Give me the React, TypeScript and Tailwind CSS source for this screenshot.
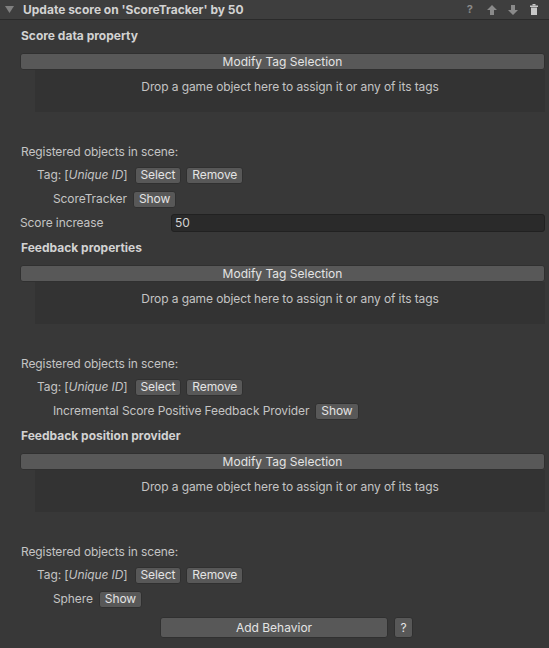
import React from "react";

const font = { fontFamily: "Inter, 'Noto Sans', sans-serif" };

function Btn({ children, className }: { children: React.ReactNode; className: string }) {
  return (
    <div
      className={
        "flex items-center justify-center rounded-[3px] bg-[#585858] border border-[#303030] text-[#e4e4e4] text-[12px] leading-none " +
        className
      }
    >
      {children}
    </div>
  );
}

function Section({ title, name, score }: { title: string; name: string; score?: boolean }) {
  return (
    <div>
      <div className="h-[18px] flex items-center pl-[1px] font-bold text-[#d2d2d2] tracking-normal">{title}</div>
      <Btn className="mt-[8px] h-[17px] w-full tracking-normal">Modify Tag Selection</Btn>
      <div className="ml-[15px] h-[42px] bg-[#333333] flex justify-center pt-[8px]">
        <span className="h-[18px] leading-[18px] text-[#c4c4c4]">
          Drop a game object here to assign it or any of its tags
        </span>
      </div>
      <div className="mt-[31px] h-[18px] flex items-center pl-[1px]">Registered objects in scene:</div>
      <div className="mt-[5px] h-[18px] flex items-center pl-[17px]">
        <span>
          Tag: [<i>Unique ID</i>]
        </span>
        <Btn className="ml-[7px] h-[17px] px-[5px]">Select</Btn>
        <Btn className="ml-[5px] h-[17px] px-[5px]">Remove</Btn>
      </div>
      <div className="mt-[6px] h-[18px] flex items-center pl-[33px]">
        <span>{name}</span>
        <Btn className="ml-[6px] h-[17px] px-[5px]">Show</Btn>
      </div>
      {score && (
        <div className="mt-[6px] h-[17px] flex items-center">
          <span className="w-[151px] shrink-0">Score increase</span>
          <div className="flex-1 h-[18px] rounded-[3px] bg-[#2a2a2a] border border-[#212121] flex items-center pl-[3px] text-[#d2d2d2]">
            50
          </div>
        </div>
      )}
    </div>
  );
}

export default function App() {
  return (
    <div
      className="w-[549px] h-[648px] bg-[#383838] text-[12px] text-[#c4c4c4] tracking-[-0.1px] overflow-hidden"
      style={font}
    >
      <div className="h-[20px] bg-[#3e3e3e] border-b border-[#2a2a2a] flex items-center tracking-normal">
        <svg width="9" height="8" viewBox="0 0 9 8" className="ml-[5px]">
          <polygon points="0,0 9,0 4.5,7" fill="#808080" />
        </svg>
        <span className="ml-[9px] font-bold text-[#d2d2d2]">Update score on 'ScoreTracker' by 50</span>
        <div className="ml-auto flex items-center mr-[11px]">
          <span className="text-[11px] font-bold text-[#8a8a8a] leading-none">?</span>
          <svg width="10" height="10" viewBox="0 0 10 10" className="ml-[14px]">
            <polygon points="5,0 10,5 7,5 7,10 3,10 3,5 0,5" fill="#8a8a8a" />
          </svg>
          <svg width="10" height="10" viewBox="0 0 10 10" className="ml-[11px]">
            <polygon points="5,10 10,5 7,5 7,0 3,0 3,5 0,5" fill="#8a8a8a" />
          </svg>
          <svg width="8" height="11" viewBox="0 0 8 11" className="ml-[12px]">
            <rect x="2.5" y="0" width="3" height="1.5" fill="#c8c8c8" />
            <rect x="0" y="1.5" width="8" height="1.5" fill="#c8c8c8" />
            <rect x="1" y="3.5" width="6" height="7.5" fill="#c8c8c8" />
          </svg>
        </div>
      </div>
      <div className="pl-[20px] pr-[4px] pt-[7px]">
        <Section title="Score data property" name="ScoreTracker" score />
        <div className="mt-[8px]">
          <Section title="Feedback properties" name="Incremental Score Positive Feedback Provider" />
        </div>
        <div className="mt-[7px]">
          <Section title="Feedback position provider" name="Sphere" />
        </div>
        <div className="mt-[9px] h-[21px] flex">
          <Btn className="ml-[140px] w-[228px] h-[21px] tracking-normal">Add Behavior</Btn>
          <Btn className="ml-[6px] w-[19px] h-[21px] text-[11px]">?</Btn>
        </div>
      </div>
    </div>
  );
}
